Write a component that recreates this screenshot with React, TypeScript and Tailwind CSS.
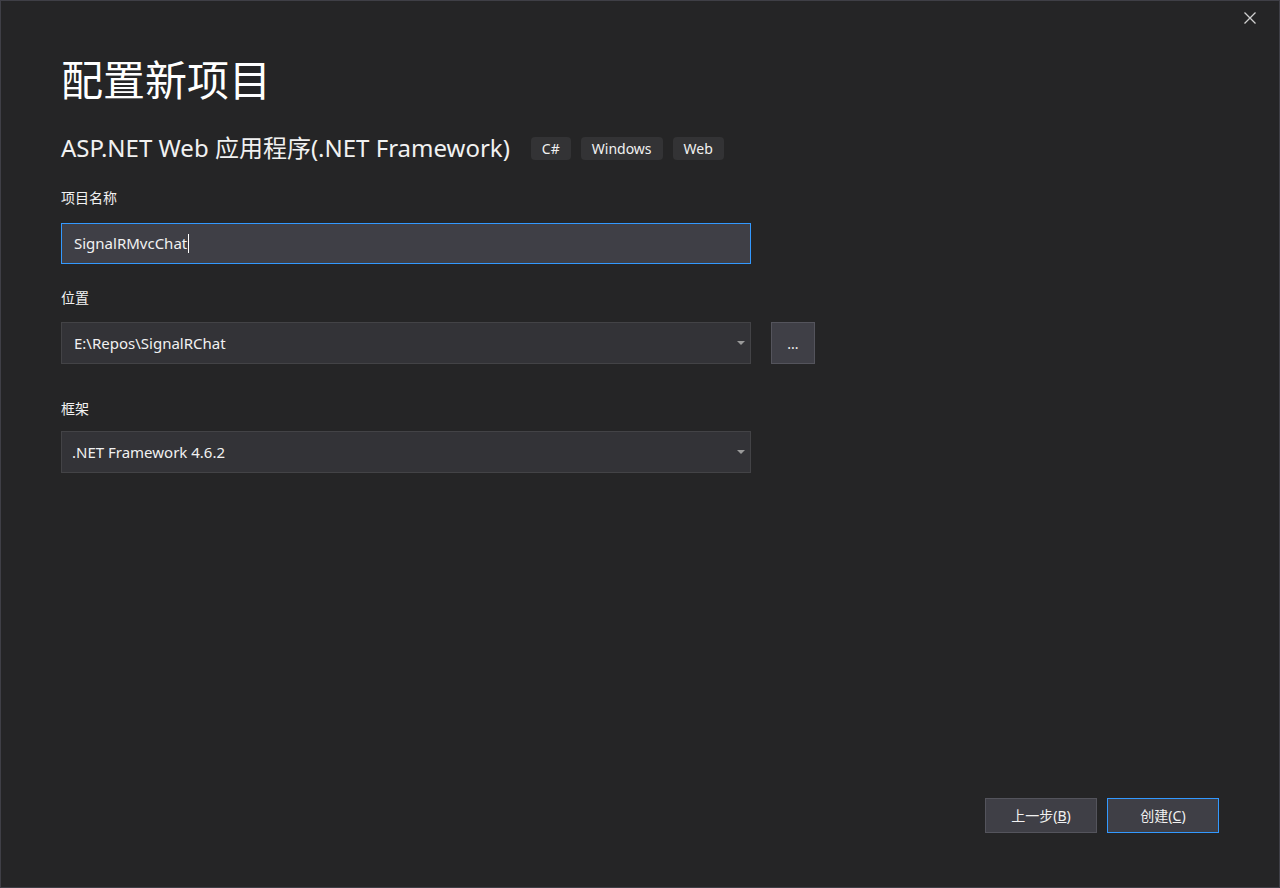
const font = { fontFamily: '"Noto Sans", "Noto Sans CJK SC", sans-serif' };

const Tag = ({ label }: { label: string }) => (
  <span className="h-[23px] px-[11px] flex items-center rounded-[4px] bg-[#333335] text-[14px] text-[#f1f1f1]">
    {label}
  </span>
);

const Caret = () => (
  <svg width="8" height="4" viewBox="0 0 8 4" className="mr-[5px]">
    <path d="M0 0 L8 0 L4 4 Z" fill="#9a9a9a" />
  </svg>
);

const App = () => {
  return (
    <div className="w-[1280px] h-[888px] bg-[#252526] border border-[#3f3f46] text-[#f1f1f1] flex flex-col" style={font}>
      <div className="flex justify-end pt-[11px] pr-[23px]">
        <svg width="12" height="12" viewBox="0 0 12 12">
          <path d="M0.5 0.5 L11.5 11.5 M11.5 0.5 L0.5 11.5" stroke="#d0d0d0" strokeWidth="1.3" />
        </svg>
      </div>

      <div className="pl-[60px] flex flex-col">
        {/* heading */}
        <h1 className="mt-[28px] text-[42px] leading-[56px] font-normal text-white">配置新项目</h1>

        <div className="mt-[24px] flex items-center gap-[10px]">
          <span className="text-[24px] leading-[32px] mr-[11px]">ASP.NET Web 应用程序(.NET Framework)</span>
          <Tag label="C#" />
          <Tag label="Windows" />
          <Tag label="Web" />
        </div>

        {/* project name */}
        <label className="mt-[24px] text-[14px] leading-[20px]">项目名称</label>
        <div className="mt-[15px] w-[690px] h-[41px] border border-[#3399ff] bg-[#3f3f46] flex items-center pl-[12px]">
          <span className="text-[15px] text-[#f1f1f1]">SignalRMvcChat</span>
          <span className="w-px h-[19px] bg-white ml-px" />
        </div>

        {/* location */}
        <label className="mt-[24px] text-[14px] leading-[20px]">位置</label>
        <div className="mt-[14px] flex items-center gap-[20px]">
          <div className="w-[690px] h-[42px] border border-[#434346] bg-[#333337] flex items-center justify-between pl-[12px]">
            <span className="text-[15px]">E:\Repos\SignalRChat</span>
            <Caret />
          </div>
          <button className="w-[44px] h-[42px] border border-[#54545c] bg-[#3f3f46] text-[14px] flex items-center justify-center">
            ...
          </button>
        </div>

        {/* framework */}
        <label className="mt-[35px] text-[14px] leading-[20px]">框架</label>
        <div className="mt-[12px] w-[690px] h-[42px] border border-[#434346] bg-[#333337] flex items-center justify-between pl-[10px]">
          <span className="text-[15px]">.NET Framework 4.6.2</span>
          <Caret />
        </div>
      </div>

      <div className="mt-auto mb-[54px] mr-[60px] flex justify-end gap-[10px]">
        <button className="w-[112px] h-[35px] border border-[#54545c] bg-[#3f3f46] text-[14px]">
          上一步(<span className="underline">B</span>)
        </button>
        <button className="w-[112px] h-[35px] border border-[#3399ff] bg-[#3f3f46] text-[14px]">
          创建(<span className="underline">C</span>)
        </button>
      </div>
    </div>
  );
};

export default App;
